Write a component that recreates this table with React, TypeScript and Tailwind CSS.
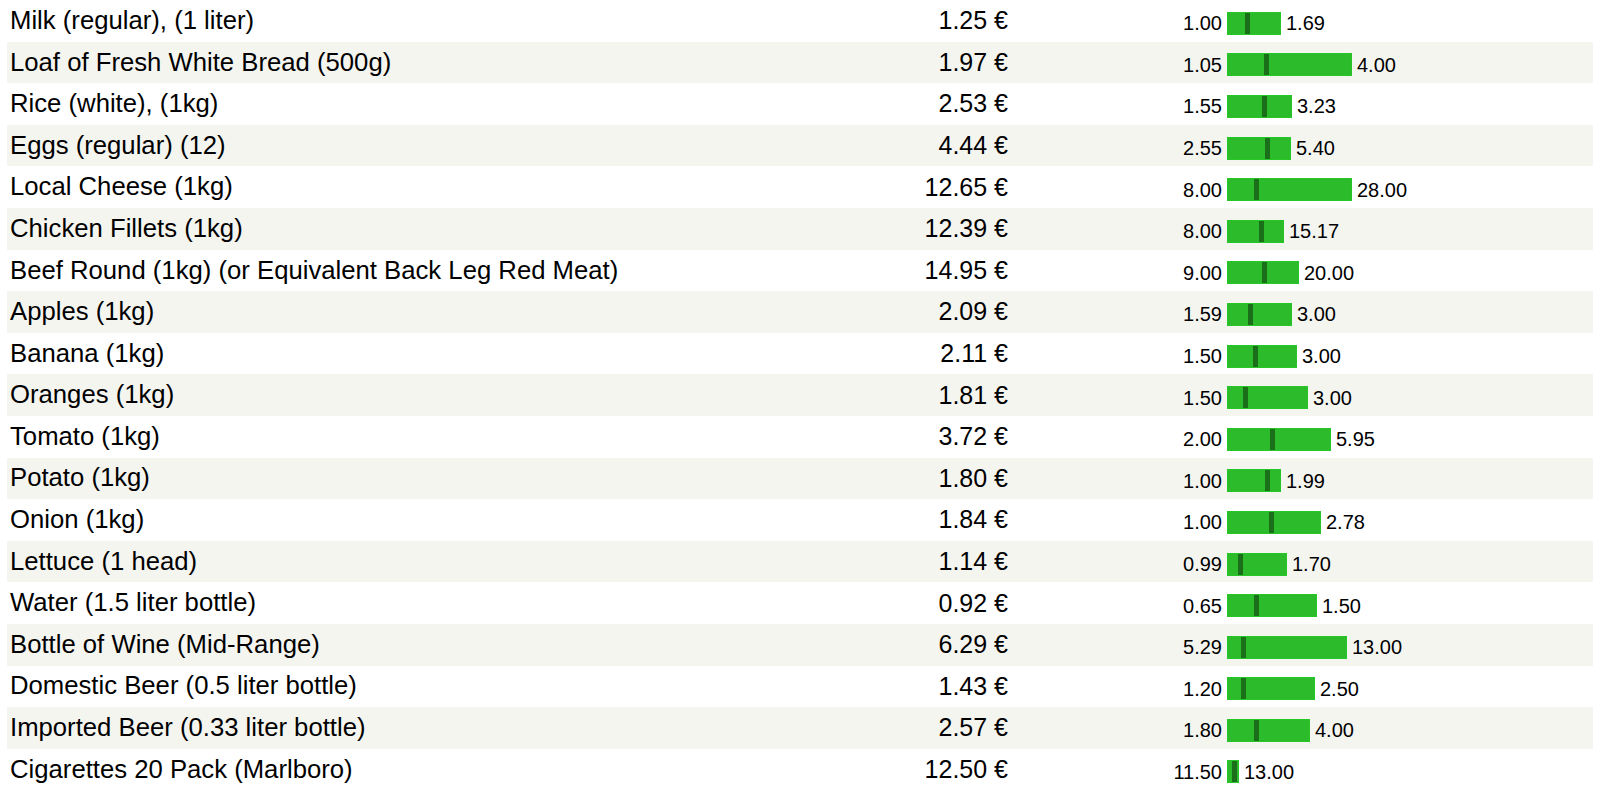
import React from "react";

type Row = { name: string; price: string; lo: string; hi: string; w: number; m: number };

const rows: Row[] = [
  { name: "Milk (regular), (1 liter)", price: "1.25 €", lo: "1.00", hi: "1.69", w: 54, m: 20 },
  { name: "Loaf of Fresh White Bread (500g)", price: "1.97 €", lo: "1.05", hi: "4.00", w: 125, m: 39 },
  { name: "Rice (white), (1kg)", price: "2.53 €", lo: "1.55", hi: "3.23", w: 65, m: 37 },
  { name: "Eggs (regular) (12)", price: "4.44 €", lo: "2.55", hi: "5.40", w: 64, m: 40 },
  { name: "Local Cheese (1kg)", price: "12.65 €", lo: "8.00", hi: "28.00", w: 125, m: 29 },
  { name: "Chicken Fillets (1kg)", price: "12.39 €", lo: "8.00", hi: "15.17", w: 57, m: 34 },
  { name: "Beef Round (1kg) (or Equivalent Back Leg Red Meat)", price: "14.95 €", lo: "9.00", hi: "20.00", w: 72, m: 37 },
  { name: "Apples (1kg)", price: "2.09 €", lo: "1.59", hi: "3.00", w: 65, m: 23 },
  { name: "Banana (1kg)", price: "2.11 €", lo: "1.50", hi: "3.00", w: 70, m: 28 },
  { name: "Oranges (1kg)", price: "1.81 €", lo: "1.50", hi: "3.00", w: 81, m: 18 },
  { name: "Tomato (1kg)", price: "3.72 €", lo: "2.00", hi: "5.95", w: 104, m: 45 },
  { name: "Potato (1kg)", price: "1.80 €", lo: "1.00", hi: "1.99", w: 54, m: 40 },
  { name: "Onion (1kg)", price: "1.84 €", lo: "1.00", hi: "2.78", w: 94, m: 44 },
  { name: "Lettuce (1 head)", price: "1.14 €", lo: "0.99", hi: "1.70", w: 60, m: 13 },
  { name: "Water (1.5 liter bottle)", price: "0.92 €", lo: "0.65", hi: "1.50", w: 90, m: 29 },
  { name: "Bottle of Wine (Mid-Range)", price: "6.29 €", lo: "5.29", hi: "13.00", w: 120, m: 16 },
  { name: "Domestic Beer (0.5 liter bottle)", price: "1.43 €", lo: "1.20", hi: "2.50", w: 88, m: 16 },
  { name: "Imported Beer (0.33 liter bottle)", price: "2.57 €", lo: "1.80", hi: "4.00", w: 83, m: 29 },
  { name: "Cigarettes 20 Pack (Marlboro)", price: "12.50 €", lo: "11.50", hi: "13.00", w: 12, m: 7 },
];

export default function App() {
  return (
    <div
      className="w-[1600px] h-[790px] bg-white overflow-hidden text-black"
      style={{ fontFamily: '"Liberation Sans", Arial, sans-serif' }}
    >
      <div className="mx-[7px] flex flex-col">
        {rows.map((r, i) => (
          <div
            key={r.name}
            className={`flex h-[41.6px] items-center ${i % 2 === 1 ? "bg-[#f5f5f0]" : "bg-white"}`}
          >
            <div className="w-[893px] pl-[3px] text-[25.7px] leading-none whitespace-nowrap">{r.name}</div>
            <div className="w-[108px] text-right text-[25px] leading-none whitespace-nowrap">{r.price}</div>
            <div className="mt-[5px] flex items-center">
              <div className="w-[214px] text-right text-[20px] leading-none">{r.lo}</div>
              <div
                className="relative ml-[5px] h-[23px] border border-[#27c627] bg-[#2bbb2b]"
                style={{ width: `${r.w}px` }}
              >
                <div
                  className="absolute top-0 bottom-0 w-[5px] bg-[#1b6f1b]"
                  style={{ left: `${r.m - 3}px` }}
                />
              </div>
              <div className="ml-[5px] text-[20px] leading-none">{r.hi}</div>
            </div>
          </div>
        ))}
      </div>
    </div>
  );
}
